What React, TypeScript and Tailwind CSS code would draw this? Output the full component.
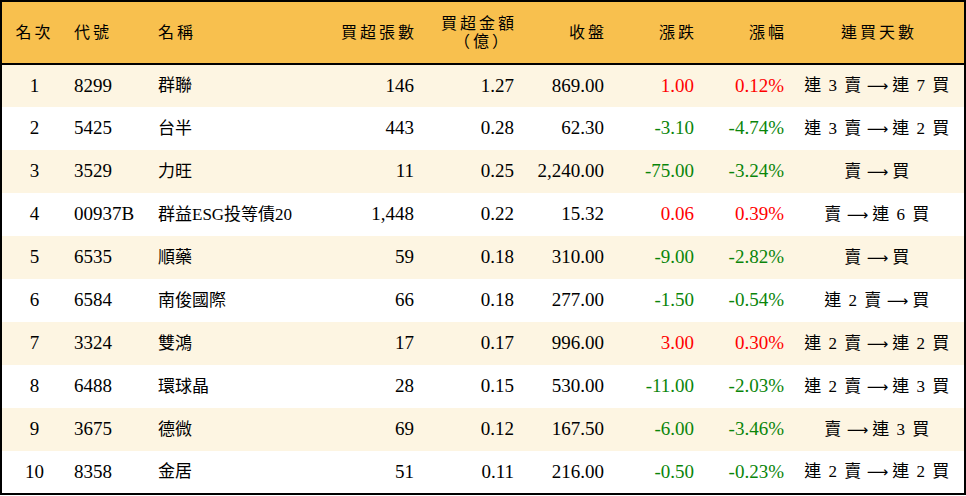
import { clsx } from 'clsx'

interface Row {
  rank: number
  code: string
  name: string
  lots: string
  amount: string
  close: string
  change: string
  pct: string
  from: string
  to: string
}

const ROWS: Row[] = [
  { rank: 1, code: '8299', name: '群聯', lots: '146', amount: '1.27', close: '869.00', change: '1.00', pct: '0.12%', from: '連 3 賣', to: '連 7 買' },
  { rank: 2, code: '5425', name: '台半', lots: '443', amount: '0.28', close: '62.30', change: '-3.10', pct: '-4.74%', from: '連 3 賣', to: '連 2 買' },
  { rank: 3, code: '3529', name: '力旺', lots: '11', amount: '0.25', close: '2,240.00', change: '-75.00', pct: '-3.24%', from: '賣', to: '買' },
  { rank: 4, code: '00937B', name: '群益ESG投等債20', lots: '1,448', amount: '0.22', close: '15.32', change: '0.06', pct: '0.39%', from: '賣', to: '連 6 買' },
  { rank: 5, code: '6535', name: '順藥', lots: '59', amount: '0.18', close: '310.00', change: '-9.00', pct: '-2.82%', from: '賣', to: '買' },
  { rank: 6, code: '6584', name: '南俊國際', lots: '66', amount: '0.18', close: '277.00', change: '-1.50', pct: '-0.54%', from: '連 2 賣', to: '買' },
  { rank: 7, code: '3324', name: '雙鴻', lots: '17', amount: '0.17', close: '996.00', change: '3.00', pct: '0.30%', from: '連 2 賣', to: '連 2 買' },
  { rank: 8, code: '6488', name: '環球晶', lots: '28', amount: '0.15', close: '530.00', change: '-11.00', pct: '-2.03%', from: '連 2 賣', to: '連 3 買' },
  { rank: 9, code: '3675', name: '德微', lots: '69', amount: '0.12', close: '167.50', change: '-6.00', pct: '-3.46%', from: '賣', to: '連 3 買' },
  { rank: 10, code: '8358', name: '金居', lots: '51', amount: '0.11', close: '216.00', change: '-0.50', pct: '-0.23%', from: '連 2 賣', to: '連 2 買' },
]

const FONT = "font-['Liberation_Serif','Noto_Sans_CJK_TC',serif]"

export default function App() {
  return (
    <div className={clsx('w-[966px] h-[496px] bg-white text-black', FONT)}>
      <table className="w-full border-2 border-black border-collapse table-fixed">
        <colgroup>
          <col className="w-[66px]" />
          <col className="w-[84px]" />
          <col className="w-[170px]" />
          <col className="w-[100px]" />
          <col className="w-[100px]" />
          <col className="w-[90px]" />
          <col className="w-[90px]" />
          <col className="w-[90px]" />
          <col />
        </colgroup>
        <thead>
          <tr className="h-[63px] bg-[#f8c04e] border-b-2 border-black text-[16px] tracking-[3px]">
            <th className="font-normal text-center">名次</th>
            <th className="font-normal text-left pl-[7px]">代號</th>
            <th className="font-normal text-left pl-[7px]">名稱</th>
            <th className="font-normal text-right pr-[4px]">買超張數</th>
            <th className="font-normal text-right pr-[4px] leading-[18px]">
              <div>買超金額</div>
              <div className="pr-[6px]">（億）</div>
            </th>
            <th className="font-normal text-right pr-[4px]">收盤</th>
            <th className="font-normal text-right pr-[4px]">漲跌</th>
            <th className="font-normal text-right pr-[4px]">漲幅</th>
            <th className="font-normal text-center pl-[3px]">連買天數</th>
          </tr>
        </thead>
        <tbody className="text-[19px]">
          {ROWS.map((r, i) => {
            const up = !r.change.startsWith('-')
            const color = up ? 'text-[#ff0000]' : 'text-[#0a850a]'
            return (
              <tr key={r.rank} className={clsx('h-[43px]', i % 2 === 0 ? 'bg-[#fdf5e2]' : 'bg-white')}>
                <td className="text-center">{r.rank}</td>
                <td className="pl-[7px]">{r.code}</td>
                <td className="pl-[7px] text-[17px]">{r.name}</td>
                <td className="text-right pr-[7px]">{r.lots}</td>
                <td className="text-right pr-[7px]">{r.amount}</td>
                <td className="text-right pr-[7px]">{r.close}</td>
                <td className={clsx('text-right pr-[7px]', color)}>{r.change}</td>
                <td className={clsx('text-right pr-[7px]', color)}>{r.pct}</td>
                <td className="text-center text-[17px] tracking-[1.5px] whitespace-nowrap">
                  {r.from}
                  <span className="font-['DejaVu_Sans',sans-serif] text-[15px] mx-[4px] tracking-normal">⟶</span>
                  {r.to}
                </td>
              </tr>
            )
          })}
        </tbody>
      </table>
    </div>
  )
}
